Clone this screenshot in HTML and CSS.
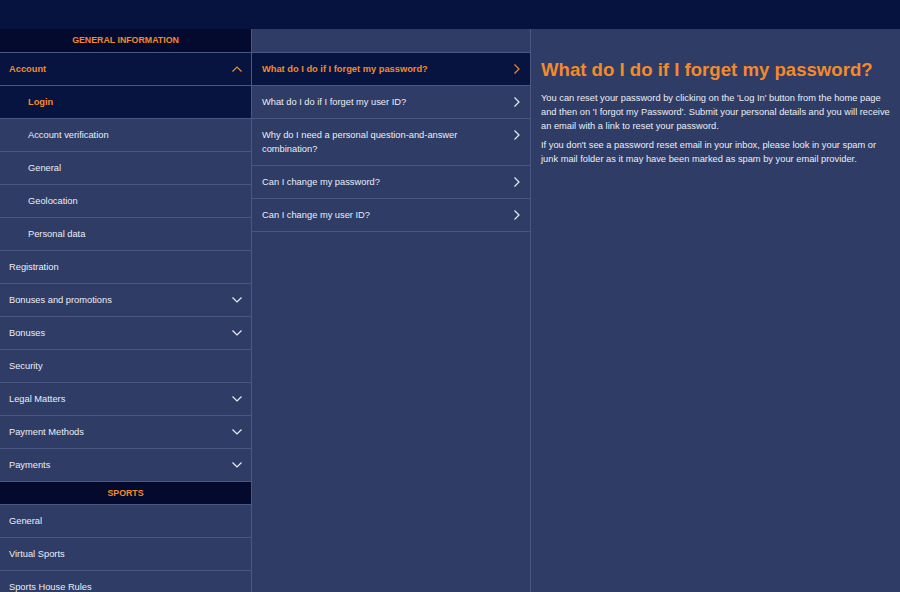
FILE: index.html
```html
<!DOCTYPE html>
<html lang="en">
<head>
<meta charset="utf-8">
<title>Help</title>
<link rel="stylesheet" href="styles.css">
</head>
<body>
<div class="topbar"></div>
<div class="main">
  <nav class="sidebar">
    <div class="section-head">GENERAL INFORMATION</div>
    <div class="row active"><span class="label">Account</span>
      <svg class="chev" width="10" height="6" viewBox="0 0 10 6"><polyline points="0.5,5.5 5,1 9.5,5.5" /></svg></div>
    <div class="row sub active"><span class="label">Login</span></div>
    <div class="row sub"><span class="label">Account verification</span></div>
    <div class="row sub"><span class="label">General</span></div>
    <div class="row sub"><span class="label">Geolocation</span></div>
    <div class="row sub"><span class="label">Personal data</span></div>
    <div class="row"><span class="label">Registration</span></div>
    <div class="row"><span class="label">Bonuses and promotions</span>
      <svg class="chev" width="10" height="6" viewBox="0 0 10 6"><polyline points="0.5,0.5 5,5 9.5,0.5" /></svg></div>
    <div class="row"><span class="label">Bonuses</span>
      <svg class="chev" width="10" height="6" viewBox="0 0 10 6"><polyline points="0.5,0.5 5,5 9.5,0.5" /></svg></div>
    <div class="row"><span class="label">Security</span></div>
    <div class="row"><span class="label">Legal Matters</span>
      <svg class="chev" width="10" height="6" viewBox="0 0 10 6"><polyline points="0.5,0.5 5,5 9.5,0.5" /></svg></div>
    <div class="row"><span class="label">Payment Methods</span>
      <svg class="chev" width="10" height="6" viewBox="0 0 10 6"><polyline points="0.5,0.5 5,5 9.5,0.5" /></svg></div>
    <div class="row"><span class="label">Payments</span>
      <svg class="chev" width="10" height="6" viewBox="0 0 10 6"><polyline points="0.5,0.5 5,5 9.5,0.5" /></svg></div>
    <div class="section-head sports">SPORTS</div>
    <div class="row"><span class="label">General</span></div>
    <div class="row"><span class="label">Virtual Sports</span></div>
    <div class="row"><span class="label">Sports House Rules</span></div>
  </nav>
  <section class="questions">
    <div class="q-head"></div>
    <div class="q active"><span class="label">What do I do if I forget my password?</span>
      <svg class="rchev" width="6" height="10" viewBox="0 0 6 10"><polyline points="0.5,0.5 5,5 0.5,9.5" /></svg></div>
    <div class="q"><span class="label">What do I do if I forget my user ID?</span>
      <svg class="rchev" width="6" height="10" viewBox="0 0 6 10"><polyline points="0.5,0.5 5,5 0.5,9.5" /></svg></div>
    <div class="q"><span class="label">Why do I need a personal question-and-answer combination?</span>
      <svg class="rchev" width="6" height="10" viewBox="0 0 6 10"><polyline points="0.5,0.5 5,5 0.5,9.5" /></svg></div>
    <div class="q"><span class="label">Can I change my password?</span>
      <svg class="rchev" width="6" height="10" viewBox="0 0 6 10"><polyline points="0.5,0.5 5,5 0.5,9.5" /></svg></div>
    <div class="q"><span class="label">Can I change my user ID?</span>
      <svg class="rchev" width="6" height="10" viewBox="0 0 6 10"><polyline points="0.5,0.5 5,5 0.5,9.5" /></svg></div>
  </section>
  <article class="detail">
    <h1>What do I do if I forget my password?</h1>
    <p>You can reset your password by clicking on the 'Log In' button from the home page and then on 'I forgot my Password'. Submit your personal details and you will receive an email with a link to reset your password.</p>
    <p>If you don't see a password reset email in your inbox, please look in your spam or junk mail folder as it may have been marked as spam by your email provider.</p>
  </article>
</div>
</body>
</html>
```
FILE: styles.css
```css
html, body {
  margin: 0;
  padding: 0;
  height: 100%;
  overflow: hidden;
}
body {
  background: #2e3c66;
  color: #eceef4;
  font-family: "Liberation Sans", Arial, sans-serif;
  font-size: 9.3px;
}
.topbar {
  height: 29px;
  background: #07133f;
}
.main {
  display: grid;
  grid-template-columns: 252px 279px 1fr;
  height: calc(100% - 29px);
}
.sidebar {
  border-right: 1px solid #4a5783;
}
.section-head {
  height: 23px;
  line-height: 23px;
  background: #030a2d;
  color: #f38a2c;
  font-weight: bold;
  font-size: 8.8px;
  text-align: center;
  border-bottom: 1px solid #4a5783;
}
.section-head.sports {
  height: 22px;
  line-height: 22px;
}
.row {
  display: flex;
  align-items: center;
  justify-content: space-between;
  padding: 9px 9px 9px 9px;
  line-height: 14px;
  border-bottom: 1px solid #4a5783;
}
.row.sub {
  padding-left: 28px;
}
.row.active, .q.active {
  background: #071440;
  color: #f38a2c;
  font-weight: bold;
}
.chev, .rchev {
  fill: none;
  stroke: #eceef4;
  stroke-width: 1.2;
  flex: none;
}
.active .chev, .active .rchev {
  stroke: #f38a2c;
}
.questions {
  border-right: 1px solid #4a5783;
}
.q-head {
  height: 23px;
  border-bottom: 1px solid #4a5783;
}
.q {
  display: flex;
  align-items: flex-start;
  gap: 12px;
  padding: 9px 10px;
  line-height: 14px;
  border-bottom: 1px solid #4a5783;
}
.q .label {
  flex: 1;
}
.rchev {
  margin-top: 2px;
}
.detail {
  padding: 30px 10px 0 10px;
}
.detail h1 {
  margin: 0 0 10px 0;
  font-size: 18.6px;
  line-height: 22px;
  color: #f38a2c;
  font-weight: bold;
}
.detail p {
  margin: 0 0 5px 0;
  line-height: 14px;
}
```
